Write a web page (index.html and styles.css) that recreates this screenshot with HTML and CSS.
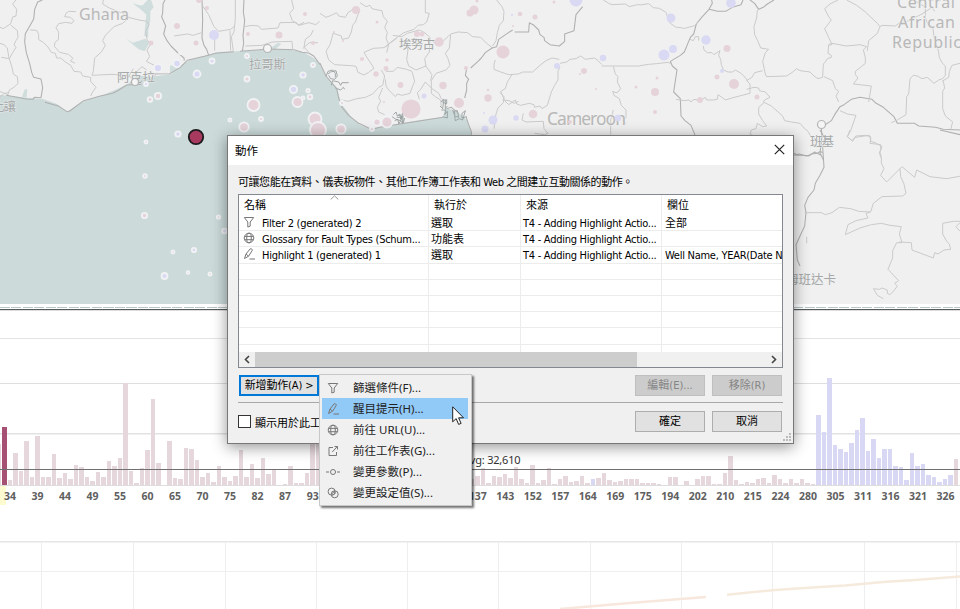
FILE: index.html
```html
<!DOCTYPE html>
<html lang="zh-Hant">
<head>
<meta charset="utf-8">
<title>動作</title>
<link rel="stylesheet" href="styles.css">
</head>
<body>
<main class="workspace">
<svg class="map" viewBox="0 0 960 304" width="960" height="304">
<rect class="land" width="960" height="304"/>
<path class="sea" d="M0 95L12 96 20 97 30 98 43 99 57 104 67 112 82 102 103 95 115 90 128 84 137 75 150 77 172 74 180 66 190 60 208 55 218 52 240 51 262 50 285 49 303 52 312 57 320 64 326 77 337 88 341 103 352 118 360 125 370 129 383 127 397 124 420 120 443 117 445 108 453 110 460 114 467 120 472 135 480 304 0 304Z"/>
<g transform="scale(.33333)">
<path class="sea inner" d="M398 10l20 6 10 0 15-16 10 0 8 22-10 12 0 26-6 30 0 22-12-4 2-24 4-40-12-12zM378 116l20 12 38-12 12 14-14 24-18-6zM66 290l8-22 8 0-2 24zM510 196l28 4-12 20-16 0zM812 144l22-16 10 4-18 16z"/>
<path class="line dark" d="M127 0l-14 6-9 22-3 29-10 18-15 26-2 25 5 32 10 33 6 26 6 15 22 5 5 26-5 30-20-1-4 6-20-1-60-11M495 0l-6 12-1 28-3 10 12 28-6 24 10 20 12 16 18 18 9 8 12 10 1 8M606 0l2 60-2 54 6 22 8 12 6 18-60 14M732 0l-2 36 4 26-5 45 2 22-4 25M135 307l42 12 24 16 8-2 42-31 50-14 37-8 14-7 28-18 44-2M440 222l70-1 30-18 22-22 64-15 20-6 55-5M720 154l88-7 74 2 24 8 20 2 14 8 20 26"/>
<path class="line" d="M48 0l-10 12 12 16-2 20-10 3-6 20-22 15-10-4M32 75l20 17 2 20-6 10-6 12 6 8-10 16-10 18-24-4M0 130l12 4 10 10 4 26 10 32 4 20 12 8 2 20-12 12-14 8-4 14-26-10M90 90l20 1 6 12 0 16 14 8 14 14 10 16 12 3 4 14 12 0 14 12 16 10 10 18 20 2 6 12 24 4 0 12 16 18-10 14-6 12M228 35l-22-1-8 6-4 10 18 2 10 10-6 8-20-3-20 4-8 12 8 14-1 22-10 8-2 12 16 18 26 6 14 12-8 8 14 6M310 0l-2 12 20 12 40 16 20 12-20 18-26 10-26 26-8 16 8 14-12 20-20 18-4 40-4 12 60-3 50 4 24 18-3 12M385 52l32 8 24 4 6 10-10 20 4 24 10 16-10 16 8 20-10 14 28 14 6 18-10 14M522 108l40-6 18 4 24-8M608 18l18 26 16 36 14 14 36-6 12-10M706 0l0 56-4 40-8 14 6 44M690 92l2 60M644 90l0 62M732 80l24-4 20 2 8 10 50-4 6-16 48-1 8 8 16-8M875 0l6 26-12 14 8 22 20 14 30-8 20 6 12-10M878 150l-2-26-60 2-30 10-50 2M940 90l-8 16-16 12-4 24 14 14M908 146l20-18 26 0M0 290l14-10 10-2M396 228l30-28 14 10M380 240l20-34"/>
</g>
<g transform="translate(320 0) scale(.33333)">
<path class="line" d="M0 40l18 12 16-6 16-8 6 10 20 4 8-14 24-16 12 8-6 14-8 22-8 10-4 20-8 18-20 4-2-10-24-8M40 98l-10 36-12 20 8 26 18 14 50 3 14 2 6 18 18 8 14-8 16-12-10-16-12-18-8-14 28-12 32-2 16-12 22-16M120 8l18 12 12-4 6 10 18 4 12 2 4 18 12 14-8 18 8 16-4 16 8 20-6 24M316 0l0 38 12 2-8 26-10 8-16 2-12 12-30 10-26 18-18 14-12 12M218 106l28 4 16-10 36-10 16 8 16 14-2 44-14 20 4 22-30 12-22-12-6-20 4-28-6-20-18-14M336 120l12 14 20-10 16-14 8-8 22-6 28 2 16 12 24 2 18 18 18 14M392 104l-4 40-12 16 8 16 6 20-12 14-30 10-14 22 0 38 12 10 16 10 2 20M316 196l20 28-4 18M64 300l20 4 26-8 26-4 22-10 18-20 12-6 6-28-10-18M198 214l22 0 12-12 28 6 16 6 8 30-6 14-8 22-24 6-14-4-6 8-20-20-8-12-2-20M188 264l-12 28 6 12-10 18 4 14 18 8M298 298l-6-20 10-10 14-22 20 20 20 14 8 16 16 8M530 0l16 20 6 14-2 28-12 14-6 22-4 24-10 16M526 180l-4 12 0 16 20 8 24 8 30-2 12-6 30 0 22-20 18-14 18-8 22 4M576 224l-14 22-6 20-14 8 6 14 6 14 12 12 20-14 4 12 12 4 26-6 14 4 2 8 16-4 6 8 16-10 12-40 10-20 10-16 0-26 6-14M540 278l12 12-2 18-16 16-6 18-6 44M720 190l20-4 10-8 18-2 14-8 14 10 28-4 10 8 12 12M845 198l115 0M880 200l6 22 8 8-2 16 10 20-8 10-6 2-10-4 4 12 16 10 6 20 14 14 0 24-10 6 10 10M548 300l20 2 14 8 14-6M610 340l-4 20 12 6 52-2 2 22 12 14-10 4-30-4M880 330l-8 30 0 44M850 0l16 10 10 4 40-2 12 8 24-6 8 0"/>
<path class="line dark" d="M452 204l22-20 10-10 12-16 20-14 14-4 6-22 26-18 16-10M584 96l42 0 2-28 14 8 14 14 4 14 12 8 2 10 16 12 28 4 16-14 0-22 28-10 6-48 20-24M440 206l-4 20 10 12-6 12 0 20-6 24"/>
<path class="line coast" d="M18 230l6-16 14-4 8 10 0 12M24 222l8-6 16-4 4 16-8 10-12-2-6-10M34 256l4-14 18 4 6 10 4-8 20 0M46 264l16 6 8-8 4 6M220 344l8-8 4 12 8-6 2 16 6-20 2 30 4-14M224 362l10-4 2 14 6-10 6 10-2-20-16 0M216 350l12 8 14 4 6-12-14-4M360 318l8 8 4-28-8 6 16 8 0-14M364 330l14 0-4 14 8-10 0 20-14-4M376 298l0 28 6-8M398 330l6 16 0-14 8 0 4 20-12-4 2 14 12-6 10 4 8-28-10 8 0 14 14-4"/>
<path class="line dark" d="M0 190l18 38 32 38 6 28 10 28 20 24 30 24 38 18 26-6 60-10 130-20M380 326l14-4 22 18M438 350l8 24 8 20 0 10"/>
</g>
<g transform="translate(640 0) scale(.33333)">
<path class="line dark" d="M215 0l2 10-10 18-22 24-16 20-8 30-10 10-18 44-12 10-30 18 6 14 14 12-10 66 20 20 2 52 12 14 18 14 10 24 4 14M207 28l26 6 24 0 20-12 26-8 6-14M330 0l14 10 12 18 14-6 12-10 20-12M550 378l24-16 10-18 16-24 12-6 22-16 26-6 36 6 10 10 24 14 32 28 10 20 52 0 12 8 50 4 24 6 50 2 12 6 28 0M544 385l2 24-6 50 10 20M462 460l10 6 20 0 14 2 8-6 18-2 8-6 8 4"/>
<path class="line" d="M0 15l26-4 14 12 18 2 20 12 10 30 18 14 28 4 30-8 10-12M0 197l26-4 24-2 34-4 8 4M150 118l10 4 6-12 10 0 0 12M190 138l2 12 10 8 14 0 6 6 18-12-4 14 6 12 2 16 6 16 14 6 14 0 8-6 14 8 10 8 8 10 6 10 6 6 0 28-24 6-30 8-20 6-10-8-12-8-2 14-12 2-20 0-4-8-14 10-20-4-10 8-4-6-16 2-24-4M352 30l-2 24-8 26 2 24 10 20 8 20 24 4-10 10-8 26 8 38 4 8 60-2 18-12 12-10 10 6 30 4 12 12 12 8 14-4 2-40 6-6 6-10 12-4 0-6-10-6 2-26 8-4 14 2 30 6 24-2 18-2 20 6-10 10 6 22 0 18-12 10-18 14 0 10 8 10-14 18 54 6-8 48M320 242l16-10 8-14 24-6M320 268l22-6 14 2 2 8 18 4 14 16-16 8-4 6 24 12 34 30 6 14 20 4 26 4 14 16 10 8 10 18M372 308l-16 14 0 20 12 20 12 16-12 2-16-10-4 16-14 4-4 12 18 10M594 0l-24 12-16 14 12 24 8 10-20 26 12 26 10 22-8 2M620 0l30 16 26 20 36 34 8 10 6-4 40 2 10-8 30-8 40-20 30-20 8 12M720 80l-8 20-26 22-4 30M822 0l34 22 0 30 8 22 14 6 4 30 8 26 6 20 2 16 8 16 10 10 0 28-8 10-12 4-14 10-20-18-16 4-14-8-12-2-10 10-4 46-6 8-2 54-26 16-18 8M960 190l-24 6-8 18-2 18-20 12M910 244l4 20-6 10 0 52 8 22 22 18-6 22M552 230l26 12 8 24 10 8-8 14 8 18M600 332l22 10 26 4-16 46-10 18 16 14 8-12 42-6 4 12-2 12 32 4 0 14-4 12 6 14"/>
</g>
<g transform="translate(780 130) scale(.33333)">
<path class="line dark" d="M120 0l14 24-6 28 4 60-12 24-14 24-4 20-18 22-10 24 4 22-4 40-14 30-12 26 4 46 8 18M42 76l16-4 20 6 14-4 12-8 20 10M480 0l60 14"/>
<path class="line" d="M210 0l-8 20 14 12 12-14 28-2 16 4 0 14 14 4 20 12-6 16 4 16 0 18 8 16-10 20 18 20 46-46 14 12 24 20 6-22 40 20 50 6 44-8M360 116l2 24 10 22 6 28-10 8-62 2-26 20-8 26-14 4 6 14-36 8-24 12-8 30 44-20 34-10 30-4 26 6 34 4-6 22 8 26-16 0-12 24 0 22-14 34 32 34-12 8 8 8-10 14-12 12-8-4 0-10-16-6-8 4-18-2 12 20 18 10M74 248l50 0 12 6 20-6 22-16 34 4 24 8 34 2M358 336l36 2 2 22 64 24 4-16 10 4 18-12 20-2-4-16-8-8-12-22 0-32 32-6 20 0M540 278l-12 12 12 14M80 340l0-20"/>
</g>
<g class="places">
<text x="79" y="20" font-size="16" textLength="50">Ghana</text>
<text x="547" y="125" font-size="17.5" textLength="79">Cameroon</text>
<text x="897" y="8" font-size="16" textLength="58">Central</text>
<text x="898" y="28" font-size="16" textLength="57">African</text>
<text x="892" y="48" font-size="16" textLength="69">Republic</text>
<g class="cjk">
<text x="117" y="82" textLength="38">阿克拉</text>
<text x="249" y="69" textLength="37">拉哥斯</text>
<text x="399" y="49" textLength="36">埃努古</text>
<text x="810" y="146" textLength="24">班基</text>
<text x="786" y="284" textLength="50">姆班达卡</text>
<text x="-8" y="111" textLength="24">比讓</text>
</g>
</g>
<g class="town"><circle cx="267.500" cy="48.500" r="4"/><circle cx="821.500" cy="124.500" r="4"/><circle cx="135" cy="82" r="3.500"/></g>
<g class="dots" id="dots"></g>
<circle class="selected" cx="196" cy="137" r="7.200"/>
</svg>
<div class="divider"></div>
<section class="histogram">
<div class="plot"><div class="bars" id="bars"></div><span class="average">Avg: 32,610</span></div>
<div class="axis" id="axis"></div>
</section>
<svg class="trend" viewBox="0 541 960 68" width="960" height="68">
<path class="frame" d="M0 541.700H960"/>
<path class="grid" d="M0 571.500H960M41.500 542v67M133.500 542v67M225.500 542v67M316.500 542v67M407.500 542v67M498.500 542v67M590.500 542v67M681.500 542v67M772.500 542v67M864.500 542v67M956.500 542v67"/>
<path class="series first" d="M560 609L630 603 706 597"/>
<path class="series" d="M727 594.700L775 590 820 587 845 585.500 883 582 915 580 960 576.500"/>
</svg>
</main>

<div class="dialog" role="dialog">
<header class="titlebar"><span>動作</span>
<svg class="close" viewBox="0 0 11 11" width="11" height="11"><path d="M.8.8l9.400 9.400M10.200.8L.8 10.200"/></svg></header>
<div class="body">
<p class="intro">可讓您能在資料、儀表板物件、其他工作簿工作表和 <span>Web</span> 之間建立互動關係的動作。</p>
<div class="list">
<svg class="sort" viewBox="0 0 9 5" width="9" height="5"><path d="M.7 4.500L4.500.8l3.800 3.700"/></svg>
<div class="row head"><span>名稱</span><span>執行於</span><span>來源</span><span>欄位</span></div>
<div class="row"><span class="name"><svg viewBox="0 0 14 14"><use href="#i-filter"/></svg>Filter 2 (generated) 2</span><span class="cjk">選取</span><span>T4 - Adding Highlight Actio...</span><span class="cjk">全部</span></div>
<div class="row"><span class="name"><svg viewBox="0 0 14 14"><use href="#i-globe"/></svg>Glossary for Fault Types (Schum...</span><span class="cjk">功能表</span><span>T4 - Adding Highlight Actio...</span><span></span></div>
<div class="row"><span class="name"><svg viewBox="0 0 14 14"><use href="#i-pen"/></svg>Highlight 1 (generated) 1</span><span class="cjk">選取</span><span>T4 - Adding Highlight Actio...</span><span>Well Name, YEAR(Date New)</span></div>
<div class="row"><span></span><span></span><span></span><span></span></div>
<div class="row"><span></span><span></span><span></span><span></span></div>
<div class="row"><span></span><span></span><span></span><span></span></div>
<div class="row"><span></span><span></span><span></span><span></span></div>
<div class="row"><span></span><span></span><span></span><span></span></div>
<div class="row"><span></span><span></span><span></span><span></span></div>
<div class="scroll"><svg viewBox="0 0 16 15" width="16" height="15"><path d="M10 4L6.500 7.500 10 11"/></svg><i></i><svg viewBox="0 0 16 15" width="16" height="15"><path d="M6 4l3.500 3.500L6 11"/></svg></div>
</div>
<div class="actions"><button class="add">新增動作(A) &gt;</button><button class="off">編輯(E)...</button><button class="off">移除(R)</button></div>
<div class="footer"><label><i class="box"></i>顯示用於此工作簿</label><button>確定</button><button>取消</button></div>
</div>
<svg class="grip" viewBox="0 0 9 9" width="9" height="9"><path d="M6 0h2v2H6zM6 3h2v2H6zM6 6h2v2H6zM3 3h2v2H3zM3 6h2v2H3zM0 6h2v2H0z"/></svg>
</div>

<nav class="menu">
<div class="item"><svg viewBox="0 0 14 14"><g id="i-filter"><path d="M2.300 2.500h9.400L8.200 7v4.200l-2.400.8V7z"/></g></svg>篩選條件(F)...</div>
<div class="item active"><svg viewBox="0 0 14 14"><g id="i-pen"><path d="M2.500 11.500L4 7l4-5c1-.8 2.700.2 2.200 1.500L6.600 9.200zM4 7l2.600 2.200M7.500 12h5.500"/></g></svg>醒目提示(H)...</div>
<div class="item"><svg viewBox="0 0 14 14"><g id="i-globe"><circle cx="7" cy="7" r="4.800"/><ellipse cx="7" cy="7" rx="2.300" ry="4.800"/><path d="M2.600 5.400h8.800M2.600 8.700h8.800"/></g></svg>前往 URL(U)...</div>
<div class="item"><svg viewBox="0 0 14 14"><path d="M7 3.500H3v8h7.500V8M6.300 8L11 2.800M8.500 2.500h3v3"/></svg>前往工作表(G)...</div>
<div class="item"><svg viewBox="0 0 14 14"><circle cx="7" cy="7" r="2.500"/><path d="M0 7h3M11 7h3"/></svg>變更參數(P)...</div>
<div class="item"><svg viewBox="0 0 14 14"><circle cx="5.600" cy="5.600" r="3.500"/><circle cx="8.700" cy="8.300" r="3.500"/><path d="M5.500 8l3.500-3M6.500 9.500l3.500-3"/></svg>變更設定值(S)...</div>
</nav>
<svg class="cursor" viewBox="0 0 13 20" width="13" height="20"><path d="M.7.8v15l3.500-3.200 2.400 5.800 2.500-1-2.500-5.600h4.900z"/></svg>
<script src="charts.js"></script>
</body>
</html>
```
FILE: charts.js
```js
// Well markers: x, y, radius, colour (p = pink, b = blue), h = white halo over the sea
const wells = `177 26 3 p|207 8 2 p|214 35 5 b|196 43 2.5 p|151 43 2.5 p|248 34 2 p|279 35 3.5 p|305 14 2 p|313 43 2 p|199 0 3 p
158 68 4 b h|177 63.5 3.7 b h|212 61 2.5 b h|197 74 3.5 b h|247 56 2 p h|247 79 2.5 p h|303 75 2.7 b h|313 65 2 p h|146 84 2 b h|150 99.500 2.3 p h|158 96 3.2 p h
253.500 105 6 p h|293.500 89.500 3.6 b h|308 90.500 1.7 p h|297.500 102 5 p h|303 98 1.5 p h|310 97 2.3 p h|230 120 1.6 p h|244 127 4.7 p h|261 119 2 p h|178 134 2.7 b h|146 142 1.6 p h|315 119 6.5 p h|318 130 8 p h|180 53 1 p h
145 176 1.8 p h|144.500 215.500 2.7 p h|218.500 217 1.7 p h|224.500 231 2.3 b h|173 252 1.6 p h|194 250 2.2 b h|164.500 276 3 b h|188 272.500 1.4 p h|210 274 1.6 p h
356 10 4 p|377 22 1.5 p|474 10 4.5 p|470 13 3.5 p|477 1 1.5 p|417 34 3 p|422 34 2.5 p|439 42 4.7 p|343 41 1 p|334 32 1 p|362 59 2 p|387 60 1.7 p|386 68.500 2.5 p|376 74 2.7 p|400.500 85 3 p|424 96 2.5 b|384 102 1 p|411 109 9.6 p|443 85.500 3.7 p|466 68 2 p|459 103 5 p|387 122 5.5 p h|377 122 3.5 p h|341 129 4.7 p h|342 103 2 p h|372 129 2 p h
488 98 3.7 p|488 90 1.2 p|503 52 6.5 p|520 14 2.3 p|535 17 2.5 p|512 15 1 b|513 26 1 p|554 2 1.5 p|576 0 6.5 b|603 58 3.3 b|557 66 3 b|584 71 3 p|580 74 1 p|596 89 1 p|636 87 1.5 p|516 118 2.7 b|493 120 4.5 b|485 129 3.5 b|484 113 1 b|533 114 4.3 p|618 118 3.3 b|570 122 2 p
731 3 4.8 b|671 18 4.500 b|706 40 4.700 b|727 48.500 3.500 p|673 49 4 b|664 55 5.500 b|722 71 2 b|717 77 2.500 p|734 84 5 p|700 100 3 p|757 97 2.500 p|655 92 4 p|657 78 1.500 p|655 112 2 p`;
const svgNS = "http://www.w3.org/2000/svg";
wells.split(/[|\n]/).forEach(w => {
  const [x, y, r, ...kind] = w.trim().split(" ");
  const c = document.createElementNS(svgNS, "circle");
  c.setAttribute("cx", x); c.setAttribute("cy", y); c.setAttribute("r", r);
  c.setAttribute("class", kind.join(" "));
  document.getElementById("dots").append(c);
});

const heights = [41,58,5,32,14,44,8,49,8,8,31,7,12,6,20,18,8,4,13,8,24,19,27,102,14,2,17,35,86,22,0,44,7,6,37,36,25,8,12,3,19,8,4,9,35,8,21,7,27,11,16,0,1,19,2,2,12,60,60,
 9,12,7,8,5,9,4,3,10,8,6,4,9,3,2,5,8,4,2,7,6,4,9,5,3,2,8,6,
 9,17,2,9,8,11,7,18,6,2,20,2,5,17,1,6,9,3,4,9,2,6,7,12,5,3,4,6,6,6,2,2,2,1,0,8,8,0,4,0,6,9,9,1,1,12,29,5,1,3,2,6,7,2,10,6,2,6,2,6,2,1,
 70,53,107,40,36,33,42,55,67,34,46,27,36,36,19,18,5,32,19,21,10,8,3,6,10,26];
const tail = heights.slice(-88);
const row = heights.slice(0, 87).concat(tail);
const bars = document.getElementById("bars");
row.forEach((h, i) => {
  const b = document.createElement("i");
  b.style.height = h + "px";
  if (i === 1) b.className = "picked";
  else if (i === 108 || (i >= 149 && i <= 173)) b.className = "blue";
  bars.append(b);
});

const axis = document.getElementById("axis");
"34 39 44 49 55 60 65 70 75 82 87 93 98 103 111 121 131 137 143 152 157 164 169 175 194 202 210 215 224 280 305 311 316 321 326".split(" ").forEach(t => {
  const s = document.createElement("span");
  s.textContent = t;
  axis.append(s);
});
```
FILE: styles.css
```css
* { box-sizing: border-box; }
body { margin: 0; width: 960px; height: 609px; overflow: hidden; background: #fff; position: relative; font-family: "DejaVu Sans Condensed", "DejaVu Sans", "Noto Sans CJK TC", sans-serif; font-size: 11px; color: #000; }
svg { display: block; flex: none; }
.workspace { display: flex; flex-direction: column; height: 609px; }
.map { overflow: hidden; }
.land { fill: #f0f0f0; }
.sea { fill: #ccdada; }
.sea.inner { fill: #d0dddd; }
.line { fill: none; stroke: #cacaca; stroke-width: 3; stroke-linejoin: round; }
.line.dark { stroke: #b0b0b0; stroke-width: 3.2; }
.line.coast { stroke: #969c9c; stroke-width: 2.6; }
.places { fill: #b8b8b8; font-family: "Noto Sans", sans-serif; stroke: #f0f0f0; stroke-width: 2px; paint-order: stroke; stroke-opacity: .7; }
.places .cjk { font: 12.500px "Noto Sans CJK TC", sans-serif; fill: #a5a8a8; stroke-width: 1px; }
.town circle { fill: #f5f5f5; stroke: #b4b4b4; stroke-width: 1.2; }
.dots .p { fill: #e5d3d9; }
.dots .b { fill: #d9d9f4; }
.dots .h { stroke: #f1f2f4; stroke-width: 1.8; }
.selected { fill: #a83a60; stroke: #1c1a1d; stroke-width: 1.8; }
.divider { height: 7px; flex: none; background: linear-gradient(#fff 0 4.500px, #555b5b 4.500px 6px, #ddd 6px); }
.divider::before { content: ""; display: block; height: 4px; background: repeating-linear-gradient(90deg, #b9c6c6 0 10px, #fff 10px 11.500px) 0 3px / 100% 1px no-repeat; }

.histogram { height: 230px; flex: none; }
.plot { height: 175px; position: relative; border-bottom: 1px solid #ddd; background: linear-gradient(#e4e4e4, #e4e4e4) 0 27px / 100% 1px no-repeat, linear-gradient(#dedede, #dedede) 0 72px / 100% 1px no-repeat, linear-gradient(#e2e2e2, #e2e2e2) 0 122px / 100% 1.500px no-repeat; }
.plot::after { content: ""; position: absolute; left: 0; right: 0; top: 158px; height: 1px; background: #707070; }
.bars { height: 174px; display: flex; align-items: flex-end; margin-left: -3.500px; width: 964px; overflow: hidden; }
.bars i { flex: none; width: 4.707px; margin-right: .8px; background: #e5d7dc; }
.bars .blue { background: #d8d8f4; }
.bars .picked { background: #a65073; }
.average { position: absolute; left: 463px; top: 142px; font: 11px/14px "Noto Sans", sans-serif; letter-spacing: -.2px; color: #333; }
.axis { display: flex; margin-left: -3.800px; width: 970px; font: bold 10.500px/20px "Noto Sans", sans-serif; color: #606060; }
.axis span { width: 27.530px; flex: none; text-align: center; }
.axis span:first-child { background: linear-gradient(#fffbd0, #fffbd0) 4px 0 / 6px 19px no-repeat; }
.trend .frame { stroke: #e5e5e5; stroke-width: 1.500; }
.trend .grid { stroke: #eee; fill: none; }
.trend .series { fill: none; stroke: #f6eadd; stroke-width: 2.500; }
.trend .first { stroke: #f7e7dc; }

.dialog { position: absolute; left: 227px; top: 135px; width: 567px; height: 309px; border: 1px solid #777; background: #f0f0f0; box-shadow: 0 3px 14px rgba(0,0,0,.42); }
.titlebar { height: 29px; background: #fff; display: flex; justify-content: space-between; align-items: center; padding: 0 8px 2px 7px; font-size: 11.500px; }
.close path { stroke: #222; stroke-width: 1.200; fill: none; }
.body { padding: 10px 10px 0; }
.intro { margin: 0; height: 19px; line-height: 16px; white-space: nowrap; letter-spacing: -.45px; }
.list { height: 174px; border: 1px solid #828790; background: #fff; position: relative; overflow: hidden; }
.sort { position: absolute; left: 91px; top: 0; fill: none; stroke: #999; }
.row { display: grid; grid-template-columns: 190px 92px 141px 1fr; height: 16.200px; line-height: 17px; white-space: nowrap; letter-spacing: -.27px; }
.row > span { border-right: 1px solid #ececec; border-bottom: 1px solid #ececec; overflow: hidden; padding-left: 2px; }
.row > span:last-child { border-right: 0; padding-left: 3px; }
.row > .cjk, .row.head { letter-spacing: 0; }
.row.head { height: 20px; line-height: 22px; }
.row.head > span { border-bottom: 0; padding-left: 5px; }
.name { display: flex; gap: 6px; }
.row svg, .item svg { width: 14px; height: 14px; fill: none; stroke: #777; stroke-width: 1; }
.row .name { padding-left: 3px; }
.scroll { position: absolute; left: 0; right: 0; bottom: 0; height: 15px; display: flex; background: #f0f0f0; }
.scroll i { width: 382px; margin-right: auto; background: #cdcdcd; }
.scroll path { fill: none; stroke: #444; stroke-width: 1.600; }
.actions { height: 35px; display: flex; align-items: flex-start; gap: 7px; padding: 7px 1px 0; border-bottom: 1px solid #a8a8a8; }
button { width: 70px; height: 21px; padding: 0; border: 1px solid #adadad; background: #e1e1e1; color: #000; font: inherit; line-height: 19px; white-space: nowrap; }
.add { width: 80px; border: 2px solid #0078d7; margin-right: auto; line-height: 17px; letter-spacing: -.15px; }
.off { background: #ccc; border-color: #bfbfbf; color: #858585; }
.footer { display: flex; gap: 7px; padding: 8px 1px 0 0; }
label { display: flex; gap: 4px; align-items: center; margin-right: auto; height: 21px; }
.box { width: 13px; height: 13px; border: 1px solid #333; background: #fff; }
.grip { position: absolute; right: 1px; bottom: 1px; fill: #bbb; }

.menu { position: absolute; left: 319px; top: 374px; width: 153px; height: 132px; padding: 2px 2px; background: #f0f0f0; border: 1px solid #c8c8c8; box-shadow: 2px 2px 2px rgba(0,0,0,.55); font-family: "Noto Sans", "Noto Sans CJK TC", sans-serif; font-size: 11.500px; color: #222; }
.item { height: 21px; display: flex; align-items: center; gap: 13px; padding-left: 4px; white-space: nowrap; margin-right: 1px; line-height: 16px; }
.item.active { background: #91c9f7; }
.cursor { position: absolute; left: 452px; top: 406px; }
.cursor path { fill: #fff; stroke: #222; stroke-width: 1; }
```
